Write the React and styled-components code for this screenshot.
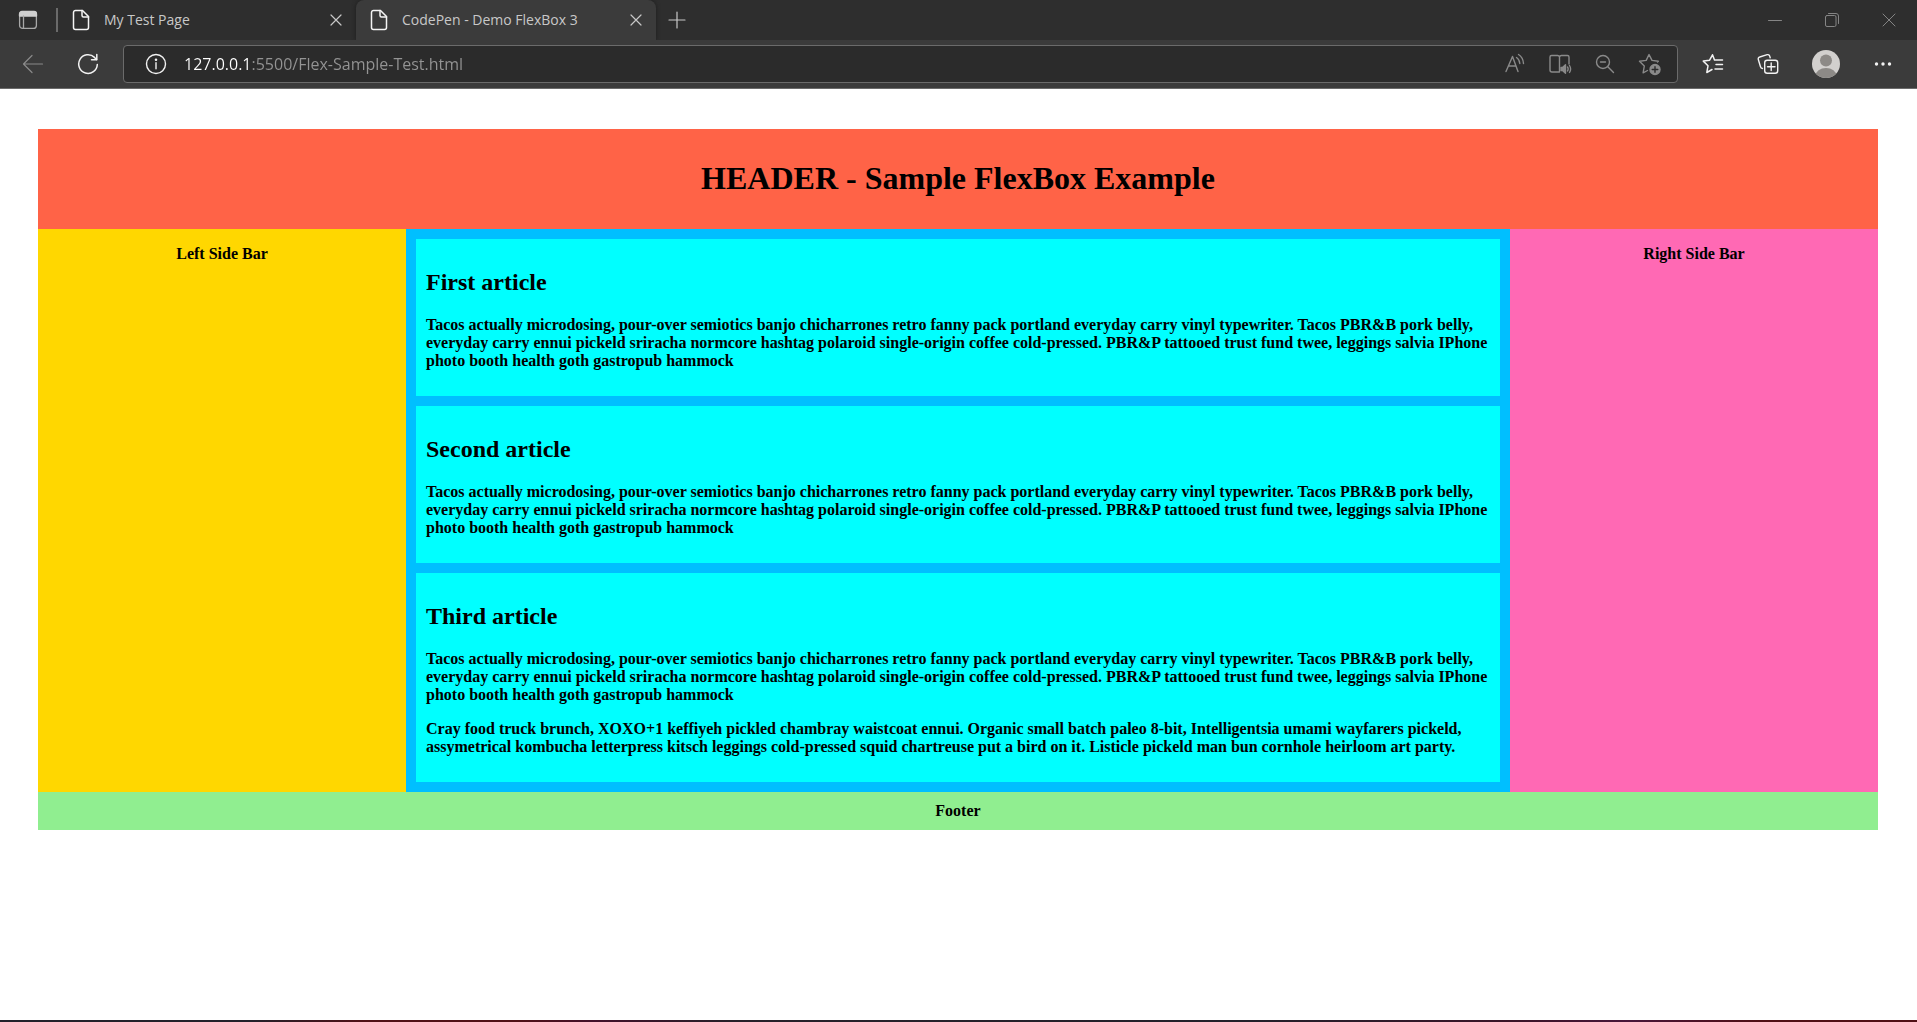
import React, { useState } from "react";
import styled, { createGlobalStyle } from "styled-components";

const GlobalStyle = createGlobalStyle`
  *, *::before, *::after { box-sizing: border-box; }
  body { margin: 0; background: #fff; }
  button { font: inherit; color: inherit; background: none; border: 0; padding: 0; }
`;

const uiFont = `"Segoe UI", "Open Sans", "Noto Sans", sans-serif`;

const Window = styled.div`
  min-height: 100vh;
  display: flex;
  flex-direction: column;
  font-family: ${uiFont};
`;

const TabStrip = styled.header`
  height: 40px;
  display: flex;
  background: #2e2e2e;
  color: #c8c8c8;
`;

const TabActions = styled.button`
  width: 56px;
  display: grid;
  place-items: center;
  color: #cfcfcf;
`;

const Divider = styled.span`
  width: 2px;
  height: 24px;
  align-self: center;
  background: #6a6a6a;
`;

const Tab = styled.div`
  width: ${(p) => (p.$active ? "300px" : "298px")};
  display: flex;
  align-items: center;
  padding: 0 10px 0 12px;
  border-radius: 8px 8px 0 0;
  background: ${(p) => (p.$active ? "#3b3b3b" : "transparent")};
  box-shadow: ${(p) => (p.$active ? "0 0 4px #1c1c1c" : "none")};
`;

const TabTitle = styled.button`
  flex: 1;
  display: flex;
  align-items: center;
  gap: 12px;
  font-size: 14px;
  line-height: 20px;
  white-space: nowrap;
`;

const CloseButton = styled.button`
  width: 20px;
  height: 20px;
  display: grid;
  place-items: center;
`;

const NewTab = styled.button`
  width: 42px;
  display: grid;
  place-items: center;
`;

const WindowControls = styled.div`
  margin-left: auto;
  display: flex;
  color: #858585;
`;

const WindowButton = styled.button`
  width: 57px;
  display: grid;
  place-items: center;
`;

const Toolbar = styled.nav`
  height: 49px;
  display: flex;
  align-items: center;
  padding: 0 14px 0 5px;
  background: #3b3b3b;
  border-bottom: 1px solid #6b6b6b;
  color: #f2f2f2;
`;

const NavButtons = styled.div`
  display: flex;
`;

const ToolButton = styled.button`
  width: ${(p) => p.$width || 55}px;
  height: 40px;
  display: grid;
  place-items: center;
  color: ${(p) => (p.$dim ? "#8a8a8a" : "inherit")};
`;

const AddressBar = styled.div`
  flex: 1;
  height: 38px;
  display: flex;
  align-items: center;
  margin-left: 8px;
  padding: 0 5px 0 10px;
  background: #2b2b2b;
  border: 1px solid #6b6b6b;
  border-radius: 4px;
`;

const Address = styled.input`
  flex: 1;
  min-width: 0;
  height: 28px;
  margin: 0 0 0 6px;
  padding: 0;
  border: 0;
  outline: 0;
  font-family: ${uiFont};
  font-size: 16px;
  color: transparent;
  caret-color: #fff;
  background: linear-gradient(90deg, #ffffff 68px, #949494 68px);
  background-clip: text;
  -webkit-background-clip: text;
`;

const Viewport = styled.div`
  flex: 1;
  padding: 40px 39px 40px 38px;
  background: #fff;
  color: #000;
  font: bold 16px/18px "Times New Roman", "Liberation Serif", serif;
`;

const PageHeader = styled.header`
  padding: 10px;
  background: tomato;
  text-align: center;
`;

const PageTitle = styled.h1`
  margin: 21px 0 23px;
  font-size: 32px;
  line-height: 36px;
`;

const Columns = styled.div`
  display: flex;
`;

const SideBar = styled.aside`
  width: 20%;
  padding: 16px 0;
  text-align: center;
  background: ${(p) => p.$color};
`;

const Main = styled.main`
  width: 60%;
  display: flex;
  flex-direction: column;
  gap: 10px;
  padding: 10px;
  background: deepskyblue;
`;

const Article = styled.article`
  padding: 30px 10px 10px;
  background: aqua;
`;

const ArticleTitle = styled.h2`
  margin: 0 0 20px;
  font-size: 24px;
  line-height: 27px;
`;

const Paragraph = styled.p`
  margin: 0 0 16px;
`;

const PageFooter = styled.footer`
  padding: 10px;
  background: lightgreen;
  text-align: center;
`;

const DesktopEdge = styled.div`
  height: 2px;
  background: linear-gradient(90deg, #22212b 0%, #22212b 13%, #501016 19%, #501016 27%, #42102a 31%,
    #262029 38%, #22212b 65%, #3a1428 79%, #48163a 85%, #500f14 92%, #500f14 100%);
`;

const Icon = ({ size = 20, w = 1, children }) => (
  <svg width={size} height={size} viewBox={`0 0 ${size} ${size}`} fill="none" stroke="currentColor"
    strokeWidth={w} strokeLinecap="round" strokeLinejoin="round" aria-hidden="true">
    {children}
  </svg>
);

const TabActionsIcon = () => (
  <Icon w={1.3}>
    <rect x="1.6" y="1.6" width="16.8" height="16.8" rx="3" stroke="#a8a8a8" />
    <path d="M1.5 6V4a2.5 2.5 0 0 1 2.5-2.5h12A2.5 2.5 0 0 1 18.500 4v2z" fill="currentColor" />
    <path d="M5.500 6v12" stroke="#a8a8a8" />
  </Icon>
);
const PageIcon = () => (
  <Icon size={22} w={1.5}>
    <path d="M5.500 1.500h7l6 6v11a2 2 0 0 1-2 2h-11a2 2 0 0 1-2-2v-15a2 2 0 0 1 2-2z" stroke="#f4f4f4" />
    <path d="M12 1.500v5a1.500 1.500 0 0 0 1.500 1.500h5" stroke="#f4f4f4" />
  </Icon>
);
const CloseIcon = () => <Icon size={12} w={1.2}><path d="M1 1l10 10M11 1L1 11" /></Icon>;
const PlusIcon = () => <Icon size={18} w={1.2}><path d="M9 1v16M1 9h16" /></Icon>;
const MinimizeIcon = () => <Icon size={14}><path d="M.5 7.500h13" /></Icon>;
const RestoreIcon = () => (
  <Icon size={14}>
    <rect x=".5" y="2.500" width="10.500" height="11" rx="1.500" />
    <path d="M3.500.5H11a2.500 2.500 0 0 1 2.500 2.500v7.500" />
  </Icon>
);
const WindowCloseIcon = () => <Icon size={14}><path d="M1 1l12 12M13 1L1 13" /></Icon>;
const BackIcon = () => <Icon size={22} w={1.2}><path d="M20.500 11H1.500M10 2.500L1.500 11l8.500 8.500" /></Icon>;
const ReloadIcon = () => (
  <Icon size={22} w={1.5}>
    <path d="M20.300 11.500a9.300 9.300 0 1 1-2.800-7.100L19.500 6.500" />
    <path d="M19.800 1.500v5.300h-5.300" />
  </Icon>
);
const InfoIcon = () => (
  <Icon size={22} w={1.4}>
    <circle cx="11" cy="11" r="9.500" />
    <path d="M11 9.800v6" />
    <circle cx="11" cy="6.800" r=".6" fill="currentColor" />
  </Icon>
);
const ReadAloudIcon = () => (
  <Icon size={22} w={1.4}>
    <path d="M2 18.500L8.500 3.500 14 18.500M4.500 13h7.500" />
    <path d="M12.500 4.500q3 1.800 3.300 6M14.500 1.500q4.600 2.800 5 9" />
  </Icon>
);
const ReaderIcon = () => (
  <Icon size={24} w={1.4}>
    <path d="M11.500 4.500v15.500M11 20H4a2 2 0 0 1-2-2V5a1.500 1.500 0 0 1 1.500-1.500h6a2 2 0 0 1 2 1.500 2 2 0 0 1 2-1.500h6A1.500 1.500 0 0 1 21 5v7" />
    <path d="M13 15.500h1.500l3-2.800v8.600l-3-2.800H13z" fill="currentColor" />
    <path d="M19.500 15q1.300 2 0 4M21.500 13.500q2.200 3.500 0 7" />
  </Icon>
);
const ZoomOutIcon = () => (
  <Icon w={1.4}><circle cx="8" cy="8" r="6.500" /><path d="M5.500 8h5M12.800 12.800l5.700 5.700" /></Icon>
);
const AddFavoriteIcon = () => (
  <Icon size={23} w={1.4}>
    <path d="M19.500 9l.8-.7-6.300-.9L11 1.500 8.200 7.400 1.500 8.300l4.800 4.700-1.200 6.800 4.400-2.300" />
    <circle cx="17" cy="16.500" r="5" fill="currentColor" />
    <path d="M17 13.700v5.600M14.200 16.500h5.600" stroke="#2b2b2b" />
  </Icon>
);
const FavoritesIcon = () => (
  <Icon size={22} w={1.5}>
    <path d="M13 7H20.500M12.500 7L10.500 1.800 7.600 7.200 1.300 8.100l4.700 4.700-1.200 6.700 5.200-3" />
    <path d="M14 11.500h6.500M13 16h7.500" />
  </Icon>
);
const CollectionsIcon = () => (
  <Icon size={22} w={1.4}>
    <path d="M5.500 15.500a2.500 2.500 0 0 1-2-1.800L1.300 6.500a2 2 0 0 1 1.400-2.500l7.500-2.300a2 2 0 0 1 2.500 1.400l.5 1.700" />
    <rect x="7.700" y="7.200" width="13" height="13" rx="2.500" />
    <path d="M14.200 10v7.500M10.500 13.700h7.500" />
  </Icon>
);
const ProfileIcon = () => (
  <svg width="28" height="28" viewBox="0 0 28 28" aria-hidden="true">
    <clipPath id="avatar"><circle cx="14" cy="14" r="14" /></clipPath>
    <g clipPath="url(#avatar)">
      <rect width="28" height="28" fill="#d2d0ce" />
      <circle cx="14" cy="10.500" r="6" fill="#8d8a87" />
      <ellipse cx="14" cy="26" rx="10.500" ry="8" fill="#8d8a87" />
    </g>
  </svg>
);
const MoreIcon = () => (
  <Icon size={18}>
    <g fill="currentColor" stroke="none">
      <circle cx="2.500" cy="9" r="1.700" /><circle cx="9" cy="9" r="1.700" /><circle cx="15.500" cy="9" r="1.700" />
    </g>
  </Icon>
);

const tabs = ["My Test Page", "CodePen - Demo FlexBox 3"];

const tacos =
  "Tacos actually microdosing, pour-over semiotics banjo chicharrones retro fanny pack portland everyday carry vinyl typewriter. Tacos PBR&B pork belly, everyday carry ennui pickeld sriracha normcore hashtag polaroid single-origin coffee cold-pressed. PBR&P tattooed trust fund twee, leggings salvia IPhone photo booth health goth gastropub hammock";
const cray =
  "Cray food truck brunch, XOXO+1 keffiyeh pickled chambray waistcoat ennui. Organic small batch paleo 8-bit, Intelligentsia umami wayfarers pickeld, assymetrical kombucha letterpress kitsch leggings cold-pressed squid chartreuse put a bird on it. Listicle pickeld man bun cornhole heirloom art party.";

const articles = [
  { title: "First article", paragraphs: [tacos] },
  { title: "Second article", paragraphs: [tacos] },
  { title: "Third article", paragraphs: [tacos, cray] },
];

export default function App() {
  const [url, setUrl] = useState("127.0.0.1:5500/Flex-Sample-Test.html");
  return (
    <Window>
      <GlobalStyle />
      <TabStrip>
        <TabActions aria-label="Tab actions"><TabActionsIcon /></TabActions>
        <Divider />
        {tabs.map((title, i) => (
          <Tab key={title} $active={i === 1}>
            <TabTitle><PageIcon />{title}</TabTitle>
            <CloseButton aria-label={`Close ${title}`}><CloseIcon /></CloseButton>
          </Tab>
        ))}
        <NewTab aria-label="New tab"><PlusIcon /></NewTab>
        <WindowControls>
          <WindowButton aria-label="Minimize"><MinimizeIcon /></WindowButton>
          <WindowButton aria-label="Restore"><RestoreIcon /></WindowButton>
          <WindowButton aria-label="Close window"><WindowCloseIcon /></WindowButton>
        </WindowControls>
      </TabStrip>
      <Toolbar>
        <NavButtons>
          <ToolButton $dim aria-label="Back"><BackIcon /></ToolButton>
          <ToolButton aria-label="Refresh"><ReloadIcon /></ToolButton>
        </NavButtons>
        <AddressBar>
          <ToolButton $width={44} aria-label="Site information"><InfoIcon /></ToolButton>
          <Address aria-label="Address" value={url} onChange={(e) => setUrl(e.target.value)} />
          <ToolButton $width={45} $dim aria-label="Read aloud"><ReadAloudIcon /></ToolButton>
          <ToolButton $width={45} $dim aria-label="Immersive reader"><ReaderIcon /></ToolButton>
          <ToolButton $width={45} $dim aria-label="Zoom out"><ZoomOutIcon /></ToolButton>
          <ToolButton $width={45} $dim aria-label="Add to favorites"><AddFavoriteIcon /></ToolButton>
        </AddressBar>
        <ToolButton $width={70} aria-label="Favorites"><FavoritesIcon /></ToolButton>
        <ToolButton $width={40} aria-label="Collections"><CollectionsIcon /></ToolButton>
        <ToolButton $width={75} aria-label="Profile"><ProfileIcon /></ToolButton>
        <ToolButton $width={40} aria-label="Settings and more"><MoreIcon /></ToolButton>
      </Toolbar>
      <Viewport>
        <PageHeader><PageTitle>HEADER - Sample FlexBox Example</PageTitle></PageHeader>
        <Columns>
          <SideBar $color="gold">Left Side Bar</SideBar>
          <Main>
            {articles.map(({ title, paragraphs }) => (
              <Article key={title}>
                <ArticleTitle>{title}</ArticleTitle>
                {paragraphs.map((text) => <Paragraph key={text}>{text}</Paragraph>)}
              </Article>
            ))}
          </Main>
          <SideBar $color="hotpink">Right Side Bar</SideBar>
        </Columns>
        <PageFooter>Footer</PageFooter>
      </Viewport>
      <DesktopEdge />
    </Window>
  );
}
